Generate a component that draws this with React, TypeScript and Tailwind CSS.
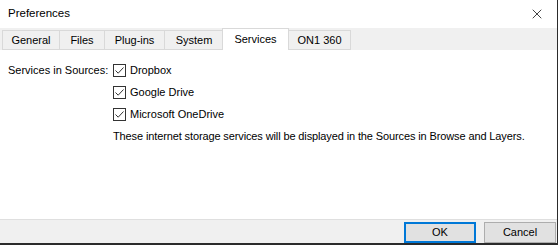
import { X } from "lucide-react";

const tabs = [
  { name: "General", w: "w-[57px]" },
  { name: "Files", w: "w-[45px]" },
  { name: "Plug-ins", w: "w-[60px]" },
  { name: "System", w: "w-[59px]" },
  { name: "Services", w: "w-[67px]" },
  { name: "ON1 360", w: "w-[62px]" },
];
const services = ["Dropbox", "Google Drive", "Microsoft OneDrive"];

function Check() {
  return (
    <span className="flex h-[13px] w-[13px] items-center justify-center border border-[#333] bg-white">
      <svg width="11" height="11" viewBox="0 0 11 11" fill="none">
        <path d="M1.5 5.5 L4.2 8.2 L9.5 2.5" stroke="#333" strokeWidth="1" />
      </svg>
    </span>
  );
}

export default function App() {
  return (
    <div className="h-[245px] w-[560px] whitespace-nowrap bg-white font-['Liberation_Sans',sans-serif] text-[11px] text-[#000]">
      <div className="flex h-[245px] w-[558px] flex-col border-r border-b-2 border-[#2b2b2b]">
        {/* title bar */}
        <div className="flex h-[28px] items-center justify-between pl-2 pr-[12px]">
          <span className="text-[11.5px]">Preferences</span>
          <X size={16} strokeWidth={1.2} className="text-[#111]" />
        </div>

        {/* tab strip */}
        <div className="flex h-[22px] items-end bg-[#f0f0f0] pl-[2px]">
          {tabs.map((t) => {
            const active = t.name === "Services";
            return (
              <div
                key={t.name}
                className={
                  active
                    ? `${t.w} relative z-10 -ml-[1px] flex h-[22px] items-center justify-center border border-b-0 border-[#d9d9d9] bg-white`
                    : t.name === "ON1 360"
                    ? `${t.w} flex h-[20px] items-center justify-center border border-l-0 border-[#d9d9d9] bg-[#f0f0f0]`
                    : `${t.w} flex h-[20px] items-center justify-center border border-r-0 border-[#d9d9d9] bg-[#f0f0f0]`
                }
              >
                {t.name}
              </div>
            );
          })}
        </div>

        {/* content */}
        <div className="flex flex-1 bg-white px-2 pt-[9px]">
          <span className="flex h-[22px] w-[105px] items-center">Services in Sources:</span>
          <div className="flex flex-col">
            {services.map((s) => (
              <div key={s} className="flex h-[22px] items-center gap-[4px]">
                <Check />
                <span>{s}</span>
              </div>
            ))}
            <span className="flex h-[22px] items-center tracking-[-0.12px]">
              These internet storage services will be displayed in the Sources in Browse and Layers.
            </span>
          </div>
        </div>

        {/* footer */}
        <div className="flex h-[24px] items-start justify-end gap-[8px] border-t border-[#dfdfdf] bg-[#f0f0f0] pr-[1px] pt-[2px]">
          <button className="h-[21px] w-[72px] border-2 border-[#0078d7] bg-[#e1e1e1]">OK</button>
          <button className="h-[21px] w-[72px] border border-[#adadad] bg-[#e1e1e1]">Cancel</button>
        </div>
      </div>
    </div>
  );
}
